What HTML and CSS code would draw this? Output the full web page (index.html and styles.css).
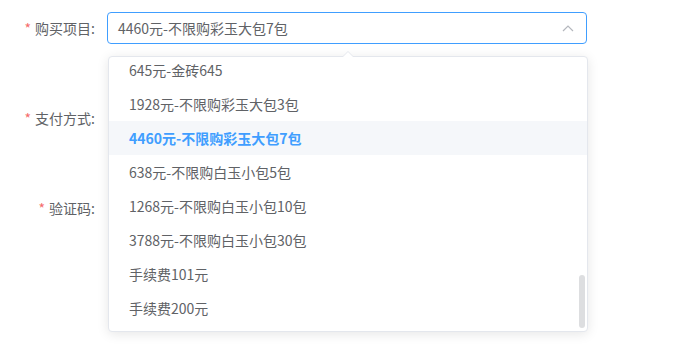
FILE: index.html
```html
<!DOCTYPE html>
<html lang="zh-CN">
<head>
  <meta charset="UTF-8" />
  <meta name="viewport" content="width=device-width, initial-scale=1.0" />
  <title>购买</title>
  <link rel="stylesheet" href="styles.css">
</head>
<body>

  <form class="form">
    <div class="form-item">
      <label class="form-label"><span class="required">*</span>购买项目:</label>
      <div class="form-content">
        <div class="select">
          <div class="select-input">
            <span class="select-value">4460元-不限购彩玉大包7包</span>
            <svg class="select-arrow" width="12" height="8" viewBox="0 0 12 8">
              <path d="M1 7 L6 2 L11 7" fill="none" stroke="#b4b7bd" stroke-width="1.2" />
            </svg>
          </div>

          <div class="dropdown">
            <div class="dropdown-arrow"></div>
            <div class="dropdown-wrap">
              <ul class="dropdown-list">
                <li class="dropdown-item">645元-金砖645</li>
                <li class="dropdown-item">1928元-不限购彩玉大包3包</li>
                <li class="dropdown-item selected">4460元-不限购彩玉大包7包</li>
                <li class="dropdown-item">638元-不限购白玉小包5包</li>
                <li class="dropdown-item">1268元-不限购白玉小包10包</li>
                <li class="dropdown-item">3788元-不限购白玉小包30包</li>
                <li class="dropdown-item">手续费101元</li>
                <li class="dropdown-item">手续费200元</li>
              </ul>
              <div class="scroll-thumb"></div>
            </div>
          </div>
        </div>
      </div>
    </div>

    <div class="form-item">
      <label class="form-label"><span class="required">*</span>支付方式:</label>
      <div class="form-content"></div>
    </div>

    <div class="form-item">
      <label class="form-label"><span class="required">*</span>验证码:</label>
      <div class="form-content"></div>
    </div>
  </form>

</body>
</html>
```

FILE: styles.css
```css
* {
  box-sizing: border-box;
}

html, body {
  min-height: 100vh;
}

body {
  margin: 0;
  background: #fff;
  font-family: "Noto Sans CJK SC", "Liberation Sans", sans-serif;
  font-size: 14px;
  color: #606266;
}

.form {
  padding-top: 12px;
  min-height: 350px;
}

.form-item {
  display: flex;
  height: 32px;
  margin-bottom: 58px;
}

.form-label {
  width: 107px;
  padding-right: 12px;
  text-align: right;
  line-height: 32px;
  color: #606266;
}

.required {
  color: #f56c6c;
  margin-right: 4px;
}

.form-content {
  width: 480px;
}

.select {
  position: relative;
}

.select-input {
  height: 32px;
  border: 1px solid #409eff;
  border-radius: 4px;
  padding: 0 12px 0 10px;
  display: flex;
  align-items: center;
  justify-content: space-between;
}

.select-value {
  color: #606266;
}

.dropdown {
  position: absolute;
  top: 44px;
  left: 1px;
  width: 480px;
  background: #fff;
  border: 1px solid #e4e7ed;
  border-radius: 4px;
  box-shadow: 0 2px 12px 0 rgba(0, 0, 0, 0.1);
  z-index: 10;
}

.dropdown-arrow {
  position: absolute;
  top: -6px;
  left: 233px;
  width: 0;
  height: 0;
  border-left: 6px solid transparent;
  border-right: 6px solid transparent;
  border-bottom: 6px solid #e4e7ed;
}

.dropdown-arrow::after {
  content: "";
  position: absolute;
  top: 1px;
  left: -6px;
  border-left: 6px solid transparent;
  border-right: 6px solid transparent;
  border-bottom: 6px solid #fff;
}

.dropdown-wrap {
  position: relative;
  height: 274px;
  overflow: hidden;
  display: flex;
  flex-direction: column;
  justify-content: flex-end;
}

.dropdown-list {
  list-style: none;
  margin: 0;
  padding: 0 0 6px;
  flex-shrink: 0;
}

.dropdown-item {
  height: 34px;
  line-height: 34px;
  padding: 0 20px;
  color: #606266;
  white-space: nowrap;
}

.dropdown-item.selected {
  color: #409eff;
  font-weight: bold;
  background: #f5f7fa;
}

.scroll-thumb {
  position: absolute;
  right: 2px;
  bottom: 3px;
  width: 6px;
  height: 53px;
  border-radius: 3px;
  background: rgba(144, 147, 153, 0.3);
}
```
